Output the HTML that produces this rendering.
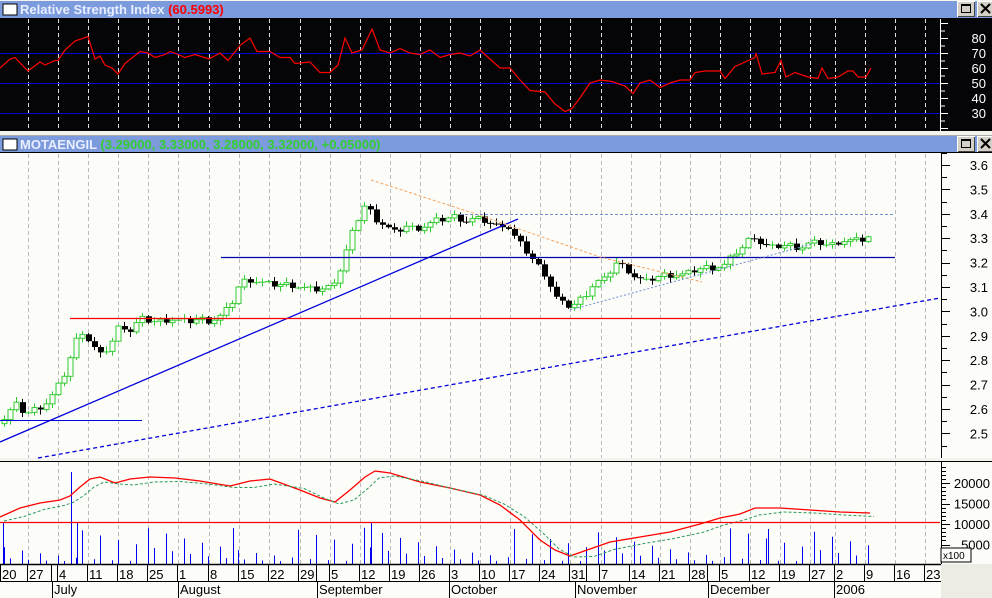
<!DOCTYPE html>
<html><head><meta charset="utf-8">
<style>
html,body{margin:0;padding:0;background:#fff;}
svg{display:block;font-family:"Liberation Sans",sans-serif;}
</style></head>
<body>
<svg id="s" width="992" height="598" xmlns="http://www.w3.org/2000/svg">
<rect x="0" y="0" width="992" height="598" fill="#f4f3ee"/>
<rect x="0" y="0" width="992" height="19" fill="#f4f3ee"/>
<rect x="0" y="1" width="992" height="17" fill="#7c9bdd"/>
<rect x="3" y="4" width="14" height="11" fill="#fff" stroke="#000" stroke-width="1"/>
<text x="20" y="14" font-size="13" font-weight="bold" fill="#e8eeff">Relative Strength Index <tspan fill="#f00">(60.5993)</tspan></text>
<rect x="0" y="18" width="992" height="1" fill="#000"/>
<rect x="0" y="19" width="992" height="112" fill="#050508"/>
<rect x="0" y="131" width="992" height="4" fill="#f4f3ee"/>
<rect x="0" y="135" width="992" height="1" fill="#aaa"/>
<rect x="0" y="136" width="992" height="16" fill="#7c9bdd"/>
<rect x="3" y="139" width="14" height="11" fill="#fff" stroke="#000" stroke-width="1"/>
<text x="20" y="149" font-size="13" font-weight="bold" fill="#e8eeff">MOTAENGIL <tspan fill="#3c3">(3.29000, 3.33000, 3.28000, 3.32000, +0.05000)</tspan></text>
<rect x="0" y="152" width="992" height="1" fill="#000"/>
<rect x="0" y="153" width="992" height="305" fill="#fcfcf8"/>
<rect x="0" y="458" width="992" height="3" fill="#f4f3ee"/>
<rect x="0" y="461" width="992" height="1" fill="#000"/>
<rect x="0" y="462" width="992" height="102" fill="#fcfcf8"/>
<g id="g"></g>
</svg>
<script>
var g=document.getElementById('g'),h='';
function L(x1,y1,x2,y2,c,w,d){h+='<line x1="'+x1+'" y1="'+y1+'" x2="'+x2+'" y2="'+y2+'" stroke="'+c+'" stroke-width="'+(w||1)+'"'+(d?' stroke-dasharray="'+d+'"':'')+'/>';}
function R(x,y,w,hh,f,s){h+='<rect x="'+x+'" y="'+y+'" width="'+w+'" height="'+hh+'" fill="'+f+'"'+(s?' stroke="'+s+'"':'')+'/>';}
function T(x,y,t,sz,c,a){h+='<text x="'+x+'" y="'+y+'" font-size="'+sz+'" fill="'+(c||'#000')+'"'+(a?' text-anchor="'+a+'"':'')+'>'+t+'</text>';}
function P(pts,c,w,d){h+='<polyline fill="none" points="'+pts.map(function(p){return p[0]+','+p[1]}).join(' ')+'" stroke="'+c+'" stroke-width="'+(w||1)+'"'+(d?' stroke-dasharray="'+d+'"':'')+'/>';}
[[957,1],[977,1],[957,136],[977,136]].forEach(function(b){R(b[0]+.5,b[1]+.5,17,15,'#d4d0c8','#fff');L(b[0]+17.5,b[1]+1,b[0]+17.5,b[1]+16,'#444');L(b[0]+1,b[1]+15.5,b[0]+18,b[1]+15.5,'#444');});
R(961.5,4.5,9,8,'none','#000');R(961,4,10,2,'#000');L(981,4,990,13,'#000',2);L(990,4,981,13,'#000',2);
R(961.5,139.5,9,8,'none','#000');R(961,139,10,2,'#000');L(981,139,990,148,'#000',2);L(990,139,981,148,'#000',2);
var gx=[28,58,88,118,148,178,209,239,269,300,330,360,390,420,450,480,510,540,570,601,631,660,690,720,750,780,810,835,865,895,925];
gx.forEach(function(x){L(x+.5,19,x+.5,131,'#ddd',1,'4,3');L(x+.5,154,x+.5,458,'#bbb',1,'4,3');L(x+.5,462,x+.5,564,'#bbb',1,'4,3');});
function ry(v){return 53+(70-v)*1.5;}
[70,50,30].forEach(function(v){L(0,ry(v)+.5,940,ry(v)+.5,'#0000cc');});
L(940.5,19,940.5,131,'#fff');
for(var v=20;v<=90;v+=5){L(940,ry(v)+.5,v%10==0?948:945,ry(v)+.5,'#fff');}
[80,70,60,50,40,30].forEach(function(v){T(986,ry(v)+5,v,13,'#fff','end');});
var rsi=[[0,60],[10,66],[15,67],[25,60],[28,58],[40,64],[45,62],[55,65],[58,65],[65,72],[75,78],[88,81],[95,66],[100,68],[105,62],[112,60],[118,56],[125,63],[140,71],[148,70],[155,67],[165,69],[170,71],[178,69],[185,67],[195,69],[209,66],[220,70],[228,65],[240,75],[250,80],[257,71],[270,71],[280,67],[290,67],[295,63],[310,64],[320,57],[330,57],[338,62],[345,80],[352,70],[362,72],[372,86],[380,72],[390,70],[400,73],[410,70],[420,69],[430,72],[440,67],[450,69],[460,70],[470,68],[480,72],[490,66],[500,60],[510,60],[520,52],[530,45],[545,44],[555,36],[565,31],[572,33],[580,40],[590,50],[600,52],[612,51],[625,48],[633,43],[640,50],[650,52],[660,47],[670,50],[680,52],[690,52],[695,57],[705,58],[720,58],[725,53],[735,61],[745,64],[755,67],[756,70],[762,56],[775,57],[781,65],[786,54],[795,57],[808,54],[818,53],[822,60],[828,53],[838,54],[848,58],[853,58],[858,54],[866,54],[871,60]];
P(rsi.map(function(p){return [p[0],ry(p[1])]}),'#f00',1.2);
function py(p){return 165+(3.6-p)*244;}
L(941.5,154,941.5,458,'#000');
for(var p=2.45;p<=3.65;p+=0.05){var y=Math.round(py(p))+.5;L(941,y,Math.abs(p*10-Math.round(p*10))<0.01?950:947,y,'#000');}
for(var i=25;i<=36;i++){var v=i/10;T(988,py(v)+5,v.toFixed(1),13,'#000','end');}
var pts=[[2,2.55],[15,2.62],[25,2.58],[35,2.6],[45,2.62],[55,2.67],[65,2.75],[75,2.87],[80,2.93],[90,2.87],[100,2.82],[110,2.86],[120,2.95],[130,2.92],[140,2.97],[150,2.96],[160,2.96],[170,2.97],[180,2.96],[190,2.96],[200,2.97],[210,2.96],[220,2.98],[230,3.02],[240,3.12],[250,3.13],[260,3.12],[270,3.11],[280,3.11],[290,3.11],[300,3.1],[310,3.09],[320,3.09],[330,3.1],[340,3.17],[350,3.3],[358,3.38],[365,3.44],[375,3.38],[385,3.35],[395,3.32],[405,3.35],[415,3.34],[425,3.35],[435,3.37],[445,3.38],[455,3.39],[465,3.37],[475,3.38],[485,3.37],[495,3.35],[505,3.36],[515,3.3],[525,3.25],[535,3.2],[545,3.15],[555,3.06],[565,3.02],[575,3.03],[585,3.07],[595,3.12],[605,3.13],[615,3.2],[625,3.18],[635,3.14],[645,3.12],[655,3.14],[665,3.15],[675,3.15],[685,3.15],[695,3.17],[705,3.18],[715,3.18],[725,3.19],[735,3.24],[745,3.27],[752,3.32],[760,3.28],[770,3.26],[780,3.27],[790,3.27],[800,3.26],[810,3.28],[820,3.28],[830,3.27],[840,3.29],[850,3.29],[860,3.29],[870,3.31]];
function interp(x){for(var i=1;i<pts.length;i++){if(x<=pts[i][0]){var a=pts[i-1],b=pts[i];return a[1]+(b[1]-a[1])*(x-a[0])/(b[0]-a[0]);}}return pts[pts.length-1][1];}
var prev=2.54,k=0;
for(var x=4;x<=872;x+=6){k++;var c=interp(x)+((k*37)%7-3)*0.004;var o=prev;var hi=Math.max(o,c)+0.005+((k*13)%5)*0.004,lo=Math.min(o,c)-0.005-((k*17)%5)*0.004;
var up=c>=o,col=up?'#33cc33':'#000';L(x+.5,py(hi),x+.5,py(lo),col);
var t=py(Math.max(o,c)),b=py(Math.min(o,c));if(b-t<1.5){L(x-3,t+.5,x+4,t+.5,col);}else if(up){R(x-2,t,5,b-t,'#fcfcf8',col);}else{R(x-2,t,6,b-t,'#000');}
prev=c;}
L(0,442,518,219,'#0000dd',1.3);
L(0,420.5,142,420.5,'#0000dd');
L(70,318.5,720,318.5,'#f00',1.3);
L(221,257.5,895,257.5,'#0000aa',1.3);
L(38,458,940,298,'#0000dd',1.3,'4,3');
P([[371,180],[470,212],[600,257],[702,282]],'#f4a460',1,'3,2');
L(460,214.5,895,214.5,'#7090d0',1,'3,2');
L(570,310,812,244,'#7090d0',1,'2,2');
function iy(v){return 524-(v-10000)*0.0041;}
L(941.5,462,941.5,564,'#000');
for(var v=0;v<=24000;v+=1000){var y=Math.round(iy(v))+.5;if(y>462&&y<564)L(941,y,v%5000==0?950:946,y,'#000');}
[20000,15000,10000,5000].forEach(function(v){T(990,iy(v)+5,v,13,'#000','end');});
R(941,548,30,14,'#fcfcf8','#000');T(943,559,'x100',10,'#000');
var kk=0;for(var x=4;x<=872;x+=6){kk++;var hv=((kk*7919)%97)/97;if(kk%3==0)continue;var hh=3+hv*hv*34;L(x+.5,564,x+.5,564-hh,'#0000ee');}
L(71.5,564,71.5,472,'#0000ee');L(77.5,564,77.5,522,'#0000ee');L(371.5,564,371.5,522,'#0000ee');L(233.5,564,233.5,528,'#0000ee');L(768.5,564,768.5,529,'#0000ee');L(3.5,564,3.5,522,'#0000ee');
var red=[[0,517],[20,508],[40,503],[60,500],[70,496],[80,487],[90,479],[100,477],[115,483],[130,479],[150,477],[175,478],[200,481],[230,486],[250,481],[270,479],[300,490],[320,498],[335,502],[350,490],[365,477],[375,471],[390,473],[420,482],[450,488],[480,495],[500,505],[520,520],[540,540],[555,550],[570,556],[590,549],[610,542],[640,537],[670,532],[700,524],[720,518],[740,514],[755,508],[780,508],[810,510],[840,512],[870,513]];
P(red,'#f00',1.3);
P(red.map(function(p,i){var q=red[Math.max(0,i-1)];return [p[0]+4,(p[1]+q[1])/2+4];}),'#2a9a5a',1,'3,2');
L(0,522.5,940,522.5,'#f00',1.3);
R(0,564,941,34,'#fcfcf8');R(941,564,51,34,'#ecebe4');
L(0,564.5,941,564.5,'#000',1.5);L(0,581.5,941,581.5,'#000');
var dl=[[2,'20'],[29,'27'],[53,''],[59,'4'],[89,'11'],[119,'18'],[149,'25'],[179,'1'],[210,'8'],[240,'15'],[270,'22'],[300,'29'],[318,''],[331,'5'],[361,'12'],[391,'19'],[421,'26'],[451,'3'],[481,'10'],[511,'17'],[541,'24'],[571,'31'],[588,''],[601,'7'],[631,'14'],[661,'21'],[691,'28'],[709,''],[721,'5'],[751,'12'],[781,'19'],[811,'27'],[836,'2'],[866,'9'],[896,'16'],[926,'23']];
dl.forEach(function(d){L(d[0]-2+.5,565,d[0]-2+.5,581,'#000');if(d[1])T(d[0],579,d[1],13,'#000');});
[[53,'July'],[179,'August'],[318,'September'],[450,'October'],[576,'November'],[709,'December'],[835,'2006']].forEach(function(m){L(m[0]-1+.5,582,m[0]-1+.5,598,'#000');T(m[0]+1,594,m[1],13,'#000');});
g.innerHTML=h;
</script>
</body></html>
